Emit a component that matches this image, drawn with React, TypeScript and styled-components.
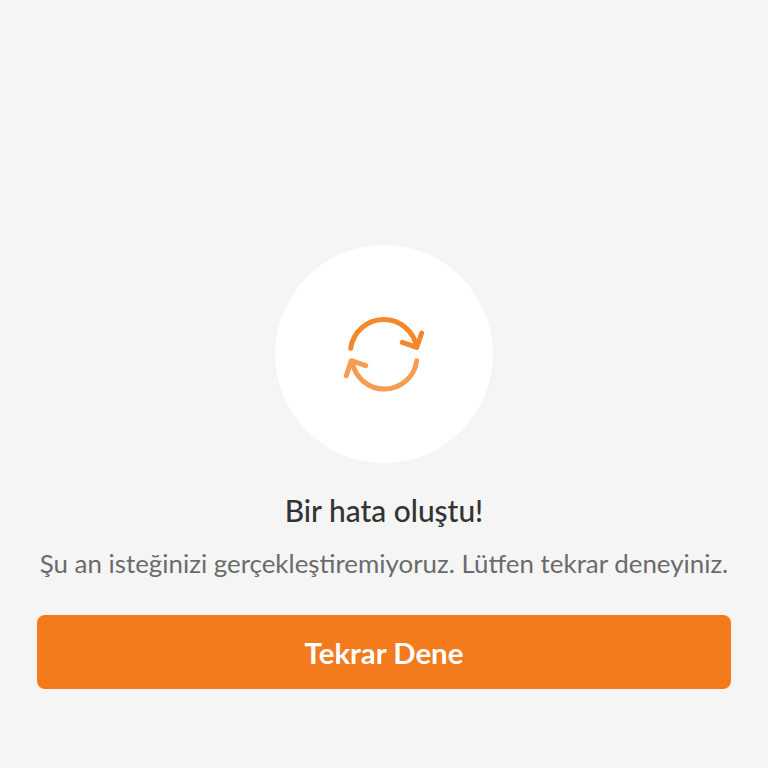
import * as React from "react";
import styled, { createGlobalStyle } from "styled-components";

const GlobalStyle = createGlobalStyle`
  html, body {
    margin: 0;
    padding: 0;
    background: #f5f5f5;
  }
`;

const RefreshIcon = () => (
  <svg width="84" height="84" viewBox="0 0 84 84" fill="none">
    <g stroke="#f5872d" strokeWidth="5" strokeLinecap="round" strokeLinejoin="round">
      <path d="M8.7 36.3A33.4 33.4 0 0 1 74.7 35.3" />
      <path d="M60.3 30.3L74.7 35.3L79.7 21" />
    </g>
    <g stroke="#f89c50" strokeWidth="5" strokeLinecap="round" strokeLinejoin="round">
      <path d="M74.7 48.7A32.6 32.6 0 0 1 10.3 50.3" />
      <path d="M23.7 53.7L9.3 48.7L4.3 63.7" />
    </g>
  </svg>
);

const App: React.FC = () => {
  return (
    <>
      <GlobalStyle />
      <Page>
        <IconCircle>
          <RefreshIcon />
        </IconCircle>
        <Title>Bir hata oluştu!</Title>
        <Message>Şu an isteğinizi gerçekleştiremiyoruz. Lütfen tekrar deneyiniz.</Message>
        <RetryButton type="button">Tekrar Dene</RetryButton>
      </Page>
    </>
  );
};

export default App;

const Page = styled.div`
  box-sizing: border-box;
  height: 768px;
  padding: 245px 37px 0;
  display: flex;
  flex-direction: column;
  align-items: center;
  background: #f5f5f5;
  font-family: Lato, "Liberation Sans", sans-serif;
`;

const IconCircle = styled.div`
  width: 218px;
  height: 218px;
  flex-shrink: 0;
  border-radius: 50%;
  background: #ffffff;
  display: flex;
  align-items: center;
  justify-content: center;
`;

const Title = styled.h1`
  margin: 29px 0 0;
  font-size: 29.9px;
  line-height: 36px;
  font-weight: 500;
  color: #333333;
`;

const Message = styled.p`
  margin: 18px 0 0;
  font-size: 25.9px;
  line-height: 34px;
  font-weight: 400;
  color: #6b6b6b;
  white-space: nowrap;
`;

const RetryButton = styled.button`
  margin-top: 35px;
  width: 100%;
  height: 74px;
  flex-shrink: 0;
  border: none;
  border-radius: 8px;
  background: #f37a1d;
  color: #ffffff;
  font-family: inherit;
  font-size: 29.4px;
  font-weight: 700;
`;
